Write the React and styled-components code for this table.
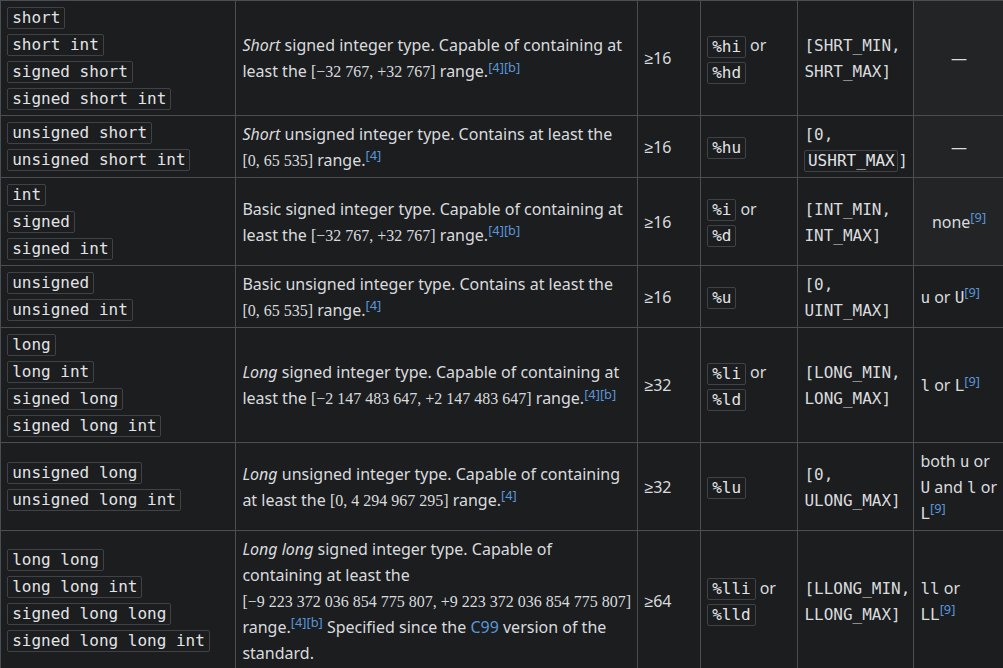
import styled, { createGlobalStyle } from "styled-components";

const Global = createGlobalStyle`
  html, body {
    margin: 0;
    overflow: hidden;
    background: #1b1d1f;
  }
`;

const Table = styled.table`
  border-collapse: collapse;
  table-layout: fixed;
  width: 1004px;
  background: #1b1d1f;
  color: #d9dbde;
  font-family: "Noto Sans", sans-serif;
  font-size: 16px;
  line-height: 26px;
`;

const Cell = styled.td`
  border: 1px solid #4a4d51;
  padding: 4.5px 6.4px;
  vertical-align: middle;
  text-align: ${(p) => (p.$na ? "center" : "left")};
  background: ${(p) => (p.$na ? "#232426" : "transparent")};
`;

const CodeStack = styled.div`
  display: flex;
  flex-direction: column;
  align-items: flex-start;
  gap: 5px;
  padding: 1px 0;
`;

const Code = styled.code`
  display: inline-block;
  font-family: "DejaVu Sans Mono", monospace;
  font-size: 16px;
  line-height: 20px;
  padding: 0 ${(p) => (p.$tight ? "2.6px" : "3.8px")};
  color: #e2e4e7;
  background: #1b1d1f;
  border: 1px solid #3f4246;
  border-radius: 2px;
  vertical-align: middle;
`;

const Mono = styled.span`
  font-family: "DejaVu Sans Mono", monospace;
  font-size: 16px;
  line-height: 1;
`;

const Math = styled.span`
  font-family: "Liberation Serif", serif;
  font-size: 16px;
  line-height: 1;
  white-space: nowrap;
`;

const Ref = styled.sup`
  font-size: 80%;
  line-height: 1;
  vertical-align: baseline;
  position: relative;
  top: -0.42em;
  color: #5a96da;
  white-space: nowrap;
`;

const Link = styled.a`
  color: #5a96da;
  text-decoration: none;
`;

const Nowrap = styled.span`
  white-space: nowrap;
`;

const widths = [235, 402, 63, 97, 116, 91];

const rows = [
  {
    names: ["short", "short int", "signed short", "signed short int"],
    desc: (
      <>
        <i>Short</i> signed integer type. Capable of containing at least the{" "}
        <Math>[−32 767, +32 767]</Math> range.<Ref>[4][b]</Ref>
      </>
    ),
    bits: "≥16",
    fmt: ["%hi", "%hd"],
    range: (
      <>
        <Mono>[SHRT_MIN,</Mono>
        <br />
        <Mono>SHRT_MAX]</Mono>
      </>
    ),
    suffix: "—",
    na: true,
  },
  {
    names: ["unsigned short", "unsigned short int"],
    desc: (
      <>
        <i>Short</i> unsigned integer type. Contains at least the{" "}
        <Math>[0, 65 535]</Math> range.<Ref>[4]</Ref>
      </>
    ),
    bits: "≥16",
    fmt: ["%hu"],
    range: (
      <>
        <Mono>[0,</Mono>
        <br />
        <Nowrap>
          <Code $tight>USHRT_MAX</Code>
          <Mono>]</Mono>
        </Nowrap>
      </>
    ),
    suffix: "—",
    na: true,
  },
  {
    names: ["int", "signed", "signed int"],
    desc: (
      <>
        Basic signed integer type. Capable of containing at least the{" "}
        <Math>[−32 767, +32 767]</Math> range.<Ref>[4][b]</Ref>
      </>
    ),
    bits: "≥16",
    fmt: ["%i", "%d"],
    range: (
      <>
        <Mono>[INT_MIN,</Mono>
        <br />
        <Mono>INT_MAX]</Mono>
      </>
    ),
    suffix: (
      <>
        none<Ref>[9]</Ref>
      </>
    ),
    na: true,
  },
  {
    names: ["unsigned", "unsigned int"],
    desc: (
      <>
        Basic unsigned integer type. Contains at least the{" "}
        <Math>[0, 65 535]</Math> range.<Ref>[4]</Ref>
      </>
    ),
    bits: "≥16",
    fmt: ["%u"],
    range: (
      <>
        <Mono>[0,</Mono>
        <br />
        <Mono>UINT_MAX]</Mono>
      </>
    ),
    suffix: (
      <>
        <Mono>u</Mono> or <Mono>U</Mono>
        <Ref>[9]</Ref>
      </>
    ),
  },
  {
    names: ["long", "long int", "signed long", "signed long int"],
    desc: (
      <>
        <i>Long</i> signed integer type. Capable of containing at least the{" "}
        <Math>[−2 147 483 647, +2 147 483 647]</Math> range.<Ref>[4][b]</Ref>
      </>
    ),
    bits: "≥32",
    fmt: ["%li", "%ld"],
    range: (
      <>
        <Mono>[LONG_MIN,</Mono>
        <br />
        <Mono>LONG_MAX]</Mono>
      </>
    ),
    suffix: (
      <>
        <Mono>l</Mono> or <Mono>L</Mono>
        <Ref>[9]</Ref>
      </>
    ),
  },
  {
    names: ["unsigned long", "unsigned long int"],
    desc: (
      <>
        <i>Long</i> unsigned integer type. Capable of containing at least the{" "}
        <Math>[0, 4 294 967 295]</Math> range.<Ref>[4]</Ref>
      </>
    ),
    bits: "≥32",
    fmt: ["%lu"],
    range: (
      <>
        <Mono>[0,</Mono>
        <br />
        <Mono>ULONG_MAX]</Mono>
      </>
    ),
    suffix: (
      <>
        both <Mono>u</Mono> or <Mono>U</Mono> and <Mono>l</Mono> or{" "}
        <Mono>L</Mono>
        <Ref>[9]</Ref>
      </>
    ),
  },
  {
    names: ["long long", "long long int", "signed long long", "signed long long int"],
    desc: (
      <>
        <i>Long long</i> signed integer type. Capable of containing at least the{" "}
        <Math>[−9 223 372 036 854 775 807, +9 223 372 036 854 775 807]</Math>{" "}
        range.<Ref>[4][b]</Ref> Specified since the <Link href="#">C99</Link> version
        of the standard.
      </>
    ),
    bits: "≥64",
    fmt: ["%lli", "%lld"],
    range: (
      <>
        <Mono>[LLONG_MIN,</Mono>
        <br />
        <Mono>LLONG_MAX]</Mono>
      </>
    ),
    suffix: (
      <>
        <Mono>ll</Mono> or <Mono>LL</Mono>
        <Ref>[9]</Ref>
      </>
    ),
  },
];

function Formats({ list }) {
  if (list.length === 1) return <Code>{list[0]}</Code>;
  return (
    <>
      <Code>{list[0]}</Code> or
      <br />
      <Code>{list[1]}</Code>
    </>
  );
}

export default function App() {
  return (
    <>
      <Global />
      <Table>
        <colgroup>
          {widths.map((w, i) => (
            <col key={i} style={{ width: w }} />
          ))}
        </colgroup>
        <tbody>
          {rows.map((r) => (
            <tr key={r.names[0]}>
              <Cell>
                <CodeStack>
                  {r.names.map((n) => (
                    <Code key={n}>{n}</Code>
                  ))}
                </CodeStack>
              </Cell>
              <Cell>{r.desc}</Cell>
              <Cell>{r.bits}</Cell>
              <Cell>
                <Formats list={r.fmt} />
              </Cell>
              <Cell>{r.range}</Cell>
              <Cell $na={r.na}>{r.suffix}</Cell>
            </tr>
          ))}
        </tbody>
      </Table>
    </>
  );
}
